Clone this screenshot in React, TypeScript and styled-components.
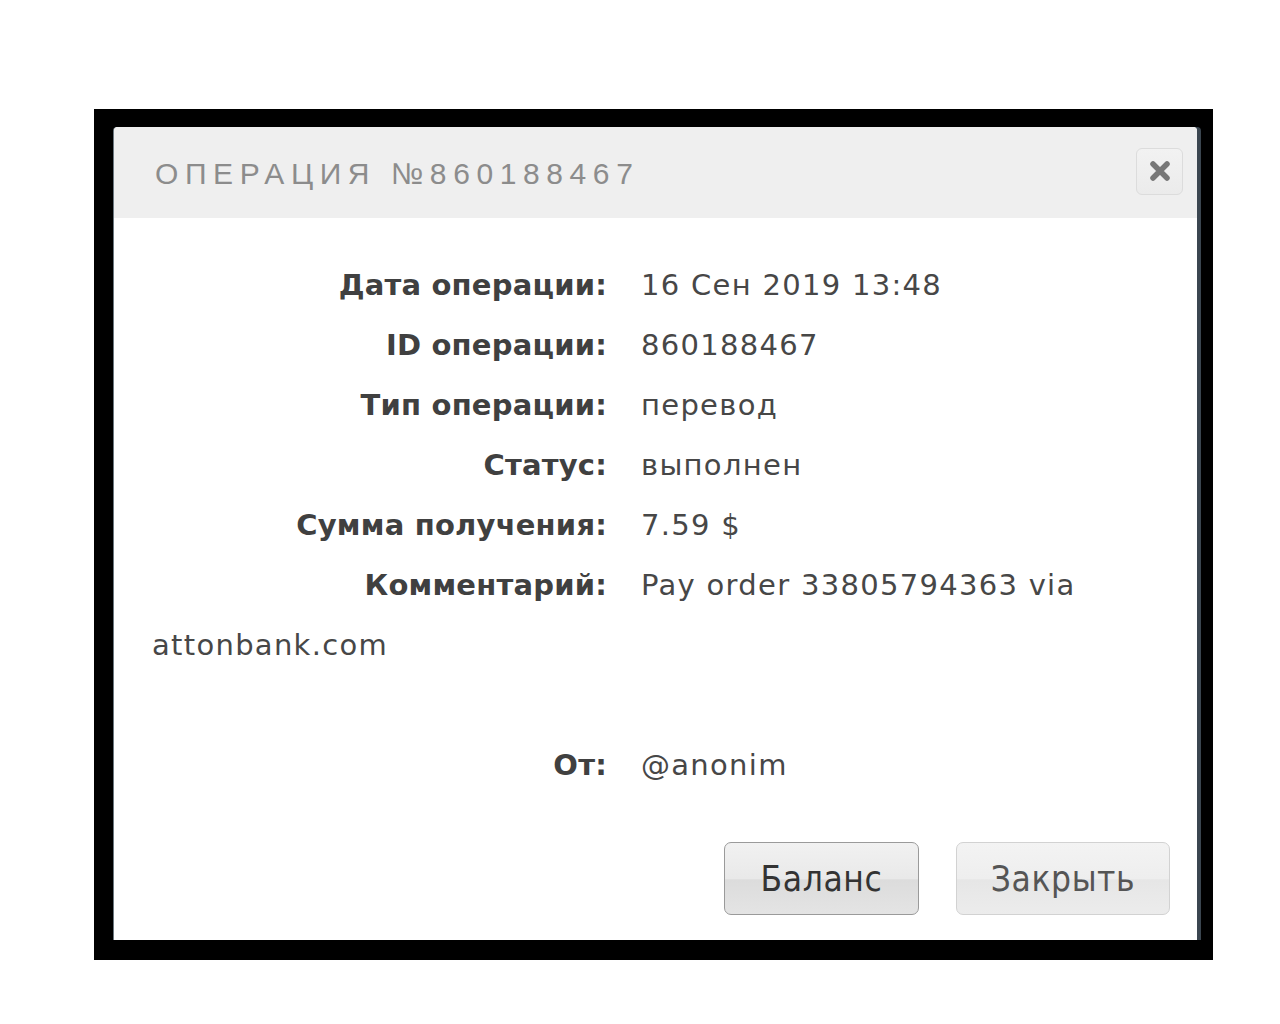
import React from "react";
import styled, { createGlobalStyle } from "styled-components";

const GlobalStyle = createGlobalStyle`
  html, body {
    margin: 0;
    padding: 0;
    background: #ffffff;
  }
  body {
    font-family: "DejaVu Sans", "Open Sans", sans-serif;
  }
`;

const Page = styled.div`
  width: 1280px;
  height: 1024px;
  background: #ffffff;
  padding: 109px 0 0 94px;
  box-sizing: border-box;
`;

const Frame = styled.div`
  width: 1119px;
  height: 851px;
  background: #000000;
  padding: 18px 16px 20px 20px;
  box-sizing: border-box;
`;

const Dialog = styled.div`
  width: 1083px;
  height: 813px;
  background: #ffffff;
  border-radius: 4px 4px 0 0;
  box-shadow: 4px 0 0 #3b4650, -1px 0 0 #6c7880;
  display: flex;
  flex-direction: column;
  overflow: hidden;
`;

const Header = styled.div`
  height: 91px;
  background: #efefef;
  display: flex;
  align-items: center;
  justify-content: space-between;
  padding: 0 14px 0 41px;
  box-sizing: border-box;
`;

const Title = styled.h1`
  margin: 0;
  font-family: "Liberation Sans", "DejaVu Sans", sans-serif;
  font-weight: 400;
  font-size: 30px;
  letter-spacing: 6.6px;
  color: #8c8c8c;
  padding-top: 2px;
`;

const CloseButton = styled.button`
  width: 47px;
  height: 47px;
  border: 1px solid #dcdcdc;
  border-radius: 6px;
  background: linear-gradient(#f2f2f2, #ebebeb);
  display: flex;
  align-items: center;
  justify-content: center;
  padding: 0;
  margin-top: -3px;
  cursor: pointer;
`;

const Body = styled.div`
  flex: 1;
  padding: 37px 30px 0 38px;
  font-size: 29px;
  line-height: 60px;
  color: #444444;
`;

const Row = styled.div`
  min-height: 60px;
`;

const Label = styled.span`
  display: inline-block;
  width: 455px;
  text-align: right;
  margin-right: 34px;
  font-weight: 700;
  color: #404040;
  letter-spacing: 0.2px;
`;

const Value = styled.span`
  font-weight: 400;
  color: #474747;
  letter-spacing: 1.3px;
`;

const Spacer = styled.div`
  height: 60px;
`;

const Footer = styled.div`
  display: flex;
  justify-content: flex-end;
  gap: 37px;
  padding: 0 27px 25px 0;
`;

const Button = styled.button<{ $primary?: boolean }>`
  height: 73px;
  width: ${(p) => (p.$primary ? "195px" : "214px")};
  border-radius: 7px;
  border: 1px solid ${(p) => (p.$primary ? "#9a9a9a" : "#d2d2d2")};
  background: ${(p) =>
    p.$primary
      ? "linear-gradient(#f1f1f1 0%, #e9e9e9 50%, #dcdcdc 52%, #e4e4e4 100%)"
      : "linear-gradient(#f3f3f3 0%, #eeeeee 50%, #e6e6e6 52%, #ececec 100%)"};
  font-family: "DejaVu Sans Condensed", "DejaVu Sans", sans-serif;
  font-size: 35px;
  letter-spacing: 0.6px;
  color: ${(p) => (p.$primary ? "#333333" : "#555555")};
  padding: 0;
  cursor: pointer;
`;

const rows: { label: string; value: string }[] = [
  { label: "Дата операции:", value: "16 Сен 2019 13:48" },
  { label: "ID операции:", value: "860188467" },
  { label: "Тип операции:", value: "перевод" },
  { label: "Статус:", value: "выполнен" },
  { label: "Сумма получения:", value: "7.59 $" },
  { label: "Комментарий:", value: "Pay order 33805794363 via attonbank.com" },
];

export default function App() {
  return (
    <>
      <GlobalStyle />
      <Page>
        <Frame>
          <Dialog>
            <Header>
              <Title>ОПЕРАЦИЯ №860188467</Title>
              <CloseButton aria-label="close">
                <svg width="24" height="24" viewBox="0 0 24 24">
                  <path
                    d="M5 5 L19 19 M19 5 L5 19"
                    stroke="#777777"
                    strokeWidth="5.5"
                    strokeLinecap="round"
                  />
                </svg>
              </CloseButton>
            </Header>
            <Body>
              {rows.map((r) => (
                <Row key={r.label}>
                  <Label>{r.label}</Label>
                  <Value>{r.value}</Value>
                </Row>
              ))}
              <Spacer />
              <Row>
                <Label>От:</Label>
                <Value>@anonim</Value>
              </Row>
            </Body>
            <Footer>
              <Button $primary>Баланс</Button>
              <Button>Закрыть</Button>
            </Footer>
          </Dialog>
        </Frame>
      </Page>
    </>
  );
}
